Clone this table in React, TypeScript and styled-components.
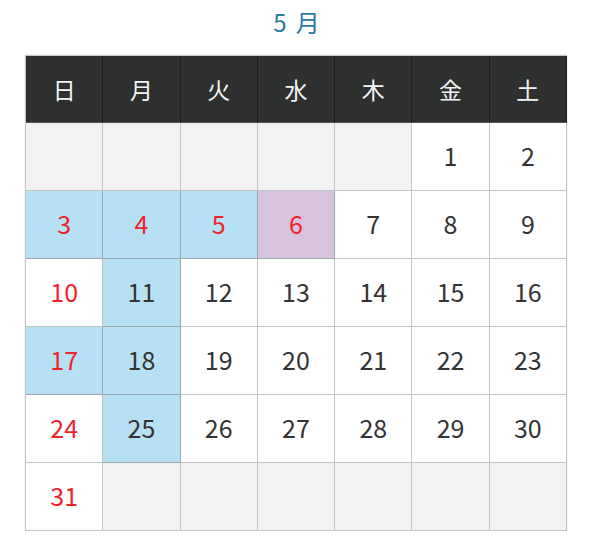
import React from "react";
import styled, { createGlobalStyle } from "styled-components";

const Global = createGlobalStyle`
  html, body { margin: 0; padding: 0; background: #fff; }
  body { font-family: "Noto Sans CJK JP", "Noto Sans", sans-serif; }
`;

const Page = styled.div`
  width: 600px;
  padding: 4px 0 0 25px;
  box-sizing: border-box;
`;

const Title = styled.h2`
  width: 542px;
  margin: 0 0 15px;
  padding-left: 10px;
  box-sizing: border-box;
  text-align: center;
  font-size: 24px;
  font-weight: 400;
  line-height: 36px;
  color: #2c7aa6;
  letter-spacing: 9px;
`;

const Grid = styled.div`
  display: grid;
  grid-template-columns: repeat(7, 1fr);
  grid-template-rows: 67px repeat(6, 68px);
  width: 542px;
  border-left: 1px solid #c4c4c4;
  border-top: 1px solid #c4c4c4;
  box-sizing: border-box;
  box-shadow: 0 0 2px rgba(0, 0, 0, 0.12);
`;

const Head = styled.div`
  display: flex;
  align-items: center;
  justify-content: center;
  background: #2e2f2f;
  color: #f4f4f4;
  font-size: 23px;
  line-height: 1;
  border-right: 1px solid #1e1e1e;
  border-bottom: 1px solid #555;
`;

type Kind = "empty" | "plain" | "blue" | "purple";

const bg: Record<Kind, string> = {
  empty: "#f2f2f2",
  plain: "#ffffff",
  blue: "#b6e1f5",
  purple: "#d8c3df",
};

const Cell = styled.div<{ $kind: Kind; $red?: boolean }>`
  display: flex;
  align-items: center;
  justify-content: center;
  background: ${(p) => bg[p.$kind]};
  color: ${(p) => (p.$red ? "#f0222c" : "#333333")};
  font-size: 25px;
  font-weight: 400;
  line-height: 1;
  padding-bottom: 2px;
  border-right: 1px solid ${(p) => (p.$kind === "blue" || p.$kind === "purple" ? "#9aa8b0" : "#c4c4c4")};
  border-bottom: 1px solid ${(p) => (p.$kind === "blue" || p.$kind === "purple" ? "#9aa8b0" : "#c4c4c4")};
`;

const heads = ["日", "月", "火", "水", "木", "金", "土"];

const blue = new Set([3, 4, 5, 11, 17, 18, 25]);
const purple = new Set([6]);
const red = new Set([3, 4, 5, 6, 10, 17, 24, 31]);

export default function App() {
  const cells: { n: number | null }[] = [];
  for (let i = 0; i < 5; i++) cells.push({ n: null });
  for (let d = 1; d <= 31; d++) cells.push({ n: d });
  while (cells.length < 42) cells.push({ n: null });

  return (
    <Page>
      <Global />
      <Title>5月</Title>
      <Grid>
        {heads.map((h) => (
          <Head key={h}>{h}</Head>
        ))}
        {cells.map((c, i) => {
          const n = c.n;
          const kind: Kind =
            n === null ? "empty" : blue.has(n) ? "blue" : purple.has(n) ? "purple" : "plain";
          return (
            <Cell key={i} $kind={kind} $red={n !== null && red.has(n)}>
              {n ?? ""}
            </Cell>
          );
        })}
      </Grid>
    </Page>
  );
}
